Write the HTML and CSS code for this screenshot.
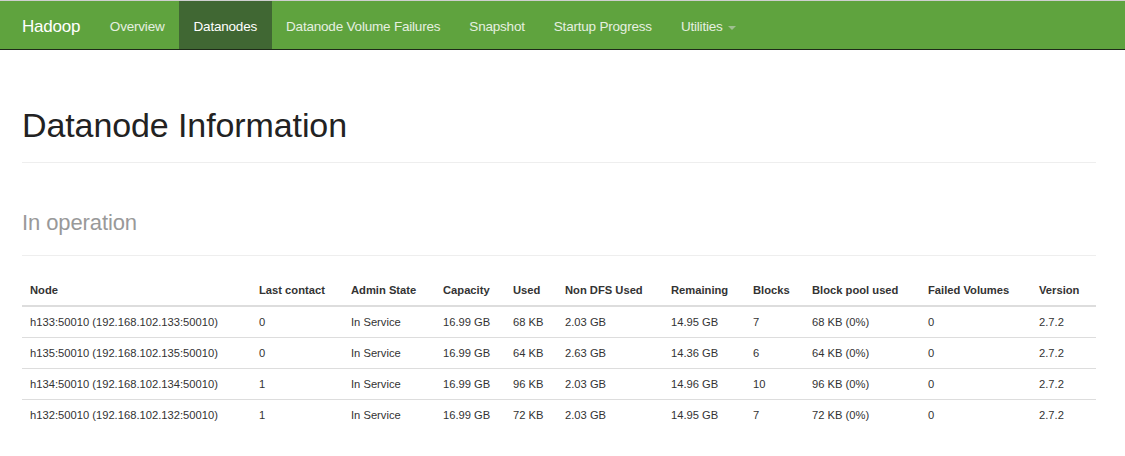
FILE: index.html
```html
<!DOCTYPE html>
<html>
<head>
<meta charset="utf-8">
<link rel="stylesheet" href="styles.css">
</head>
<body>
<header class="navbar">
  <span class="brand">Hadoop</span>
  <nav class="nav">
    <a class="nav-item">Overview</a>
    <a class="nav-item active">Datanodes</a>
    <a class="nav-item">Datanode Volume Failures</a>
    <a class="nav-item">Snapshot</a>
    <a class="nav-item">Startup Progress</a>
    <a class="nav-item">Utilities <span class="caret"></span></a>
  </nav>
</header>
<main class="container">
  <div class="page-header"><h1>Datanode Information</h1></div>
  <div class="page-header sub"><h1><small>In operation</small></h1></div>
  <table class="table">
    <thead>
      <tr>
        <th class="c-node">Node</th>
        <th class="c-last">Last contact</th>
        <th class="c-admin">Admin State</th>
        <th class="c-cap">Capacity</th>
        <th class="c-used">Used</th>
        <th class="c-non">Non DFS Used</th>
        <th class="c-rem">Remaining</th>
        <th class="c-blk">Blocks</th>
        <th class="c-pool">Block pool used</th>
        <th class="c-fail">Failed Volumes</th>
        <th class="c-ver">Version</th>
      </tr>
    </thead>
    <tbody>
      <tr><td>h133:50010 (192.168.102.133:50010)</td><td>0</td><td>In Service</td><td>16.99 GB</td><td>68 KB</td><td>2.03 GB</td><td>14.95 GB</td><td>7</td><td>68 KB (0%)</td><td>0</td><td>2.7.2</td></tr>
      <tr><td>h135:50010 (192.168.102.135:50010)</td><td>0</td><td>In Service</td><td>16.99 GB</td><td>64 KB</td><td>2.63 GB</td><td>14.36 GB</td><td>6</td><td>64 KB (0%)</td><td>0</td><td>2.7.2</td></tr>
      <tr><td>h134:50010 (192.168.102.134:50010)</td><td>1</td><td>In Service</td><td>16.99 GB</td><td>96 KB</td><td>2.03 GB</td><td>14.96 GB</td><td>10</td><td>96 KB (0%)</td><td>0</td><td>2.7.2</td></tr>
      <tr><td>h132:50010 (192.168.102.132:50010)</td><td>1</td><td>In Service</td><td>16.99 GB</td><td>72 KB</td><td>2.03 GB</td><td>14.95 GB</td><td>7</td><td>72 KB (0%)</td><td>0</td><td>2.7.2</td></tr>
    </tbody>
  </table>
</main>
</body>
</html>
```
FILE: styles.css
```css
html, body {
  margin: 0;
  padding: 0;
  background: #fff;
  font-family: "Liberation Sans", Arial, sans-serif;
  color: #333;
}
.navbar {
  display: flex;
  align-items: stretch;
  height: 48px;
  background: #5fa33e;
  border-top: 1px solid #cfcfcf;
  border-bottom: 1px solid #1e2a19;
  padding-left: 7px;
}
.brand {
  display: flex;
  align-items: center;
  padding: 3px 15px 0;
  font-size: 17px;
  color: #fff;
  letter-spacing: -0.2px;
}
.nav {
  display: flex;
}
.nav-item {
  display: flex;
  align-items: center;
  padding: 3px 14.5px 0;
  font-size: 13.5px;
  color: #e6f0e0;
  letter-spacing: -0.2px;
}
.nav-item.active {
  background: #406733;
  color: #fff;
}
.caret {
  display: inline-block;
  width: 0;
  height: 0;
  margin-left: 5px;
  margin-top: 2px;
  border-top: 4px solid #9fbf90;
  border-left: 4px solid transparent;
  border-right: 4px solid transparent;
}
.container {
  margin: 0 29px 0 22px;
}
.page-header {
  border-bottom: 1px solid #eee;
  margin-top: 57px;
  padding-bottom: 18px;
}
.page-header h1 {
  margin: 0;
  font-size: 34px;
  font-weight: 400;
  line-height: 1.1;
  color: #222;
  letter-spacing: -0.1px;
}
.page-header.sub {
  margin-top: 37px;
  padding-bottom: 17px;
}
.page-header h1 small {
  font-size: 22px;
  color: #999;
}
.table {
  width: 100%;
  margin-top: 19px;
  border-collapse: collapse;
  font-size: 11.2px;
}
.table th {
  text-align: left;
  font-weight: bold;
  padding: 8px 8px 8px;
  border-bottom: 2px solid #ddd;
  color: #333;
  height: 14px;
}
.table td {
  padding: 8px 8px 7px;
  border-bottom: 1px solid #ddd;
  color: #333;
  height: 15px;
  white-space: nowrap;
}
.table tbody tr:last-child td {
  border-bottom: none;
}
.c-node { width: 213px; }
.c-last { width: 76px; }
.c-admin { width: 76px; }
.c-cap { width: 54px; }
.c-used { width: 36px; }
.c-non { width: 90px; }
.c-rem { width: 66px; }
.c-blk { width: 43px; }
.c-pool { width: 100px; }
.c-fail { width: 95px; }
```
